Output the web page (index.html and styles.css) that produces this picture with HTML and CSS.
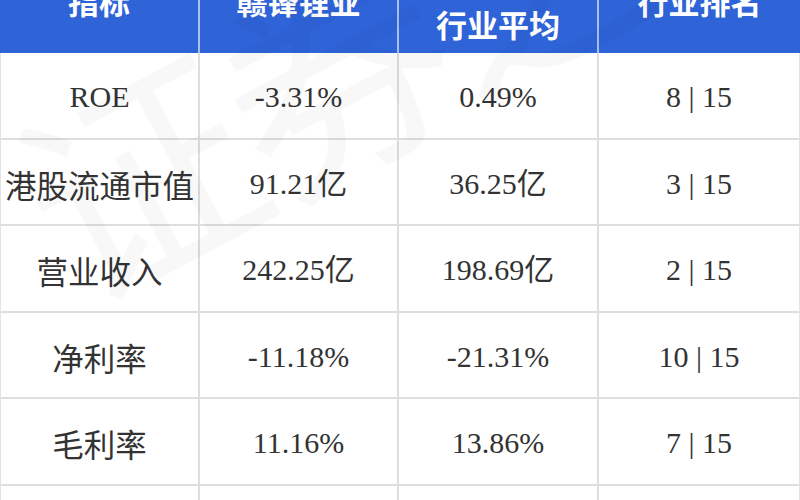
FILE: index.html
```html
<!DOCTYPE html>
<html lang="zh-CN">
<head>
<meta charset="utf-8">
<link rel="stylesheet" href="styles.css">
</head>
<body>
<div class="page">
  <div class="grid">
    <div class="th cut">指标</div>
    <div class="th cut">赣锋锂业</div>
    <div class="th mid">行业平均</div>
    <div class="th cut last">行业排名</div>

    <div class="td first"><span class="lat">ROE</span></div>
    <div class="td"><span class="num">-3.31%</span></div>
    <div class="td"><span class="num">0.49%</span></div>
    <div class="td last"><span class="num">8 | 15</span></div>

    <div class="td first"><span class="cjk">港股流通市值</span></div>
    <div class="td"><span class="num">91.21亿</span></div>
    <div class="td"><span class="num">36.25亿</span></div>
    <div class="td last"><span class="num">3 | 15</span></div>

    <div class="td first"><span class="cjk">营业收入</span></div>
    <div class="td"><span class="num">242.25亿</span></div>
    <div class="td"><span class="num">198.69亿</span></div>
    <div class="td last"><span class="num">2 | 15</span></div>

    <div class="td first"><span class="cjk">净利率</span></div>
    <div class="td"><span class="num">-11.18%</span></div>
    <div class="td"><span class="num">-21.31%</span></div>
    <div class="td last"><span class="num">10 | 15</span></div>

    <div class="td first"><span class="cjk">毛利率</span></div>
    <div class="td"><span class="num">11.16%</span></div>
    <div class="td"><span class="num">13.86%</span></div>
    <div class="td last"><span class="num">7 | 15</span></div>

    <div class="td first"></div>
    <div class="td"></div>
    <div class="td"></div>
    <div class="td last"></div>
  </div>
  <div class="watermark">证券之星</div>
</div>
</body>
</html>
```

FILE: styles.css
```css
html, body {
  margin: 0;
  padding: 0;
  background: #ffffff;
}

.page {
  position: relative;
  width: 800px;
  height: 500px;
  overflow: hidden;
}

.grid {
  display: grid;
  grid-template-columns: 200px 199px 200px 201px;
  grid-template-rows: 53px repeat(6, 86.5px);
}

.th {
  background: #2f63d8;
  color: #ffffff;
  font-family: "Noto Sans CJK SC", "Noto Sans", sans-serif;
  font-weight: 700;
  font-size: 31px;
  line-height: 32px;
  display: flex;
  justify-content: center;
  border-right: 2px solid #a9c0ef;
}

.th.last {
  border-right: none;
}

.th.cut {
  align-items: flex-start;
  margin-top: -15px;
}

.th.mid {
  align-items: flex-start;
  padding-top: 8px;
  box-sizing: border-box;
}

.td {
  display: flex;
  align-items: center;
  justify-content: center;
  border-right: 2px solid #dedede;
  border-bottom: 2px solid #dedede;
  color: #333333;
  padding-top: 4px;
  box-sizing: border-box;
}

.td.first {
  border-left: 1px solid #e4e4e4;
}

.td.last {
  border-right: 1px solid #e4e4e4;
}

.lat,
.num {
  font-family: "Liberation Serif", "Noto Sans CJK SC", serif;
  font-size: 30px;
  line-height: 36px;
}

.cjk {
  font-family: "Noto Sans CJK SC", sans-serif;
  font-size: 31.5px;
  line-height: 36px;
}

.watermark {
  position: absolute;
  left: -20px;
  top: 120px;
  font-family: "Noto Sans CJK SC", sans-serif;
  font-size: 230px;
  line-height: 1;
  color: rgba(0, 0, 0, 0.028);
  transform: rotate(-28deg);
  transform-origin: left top;
  pointer-events: none;
  white-space: nowrap;
  letter-spacing: -10px;
}
```
